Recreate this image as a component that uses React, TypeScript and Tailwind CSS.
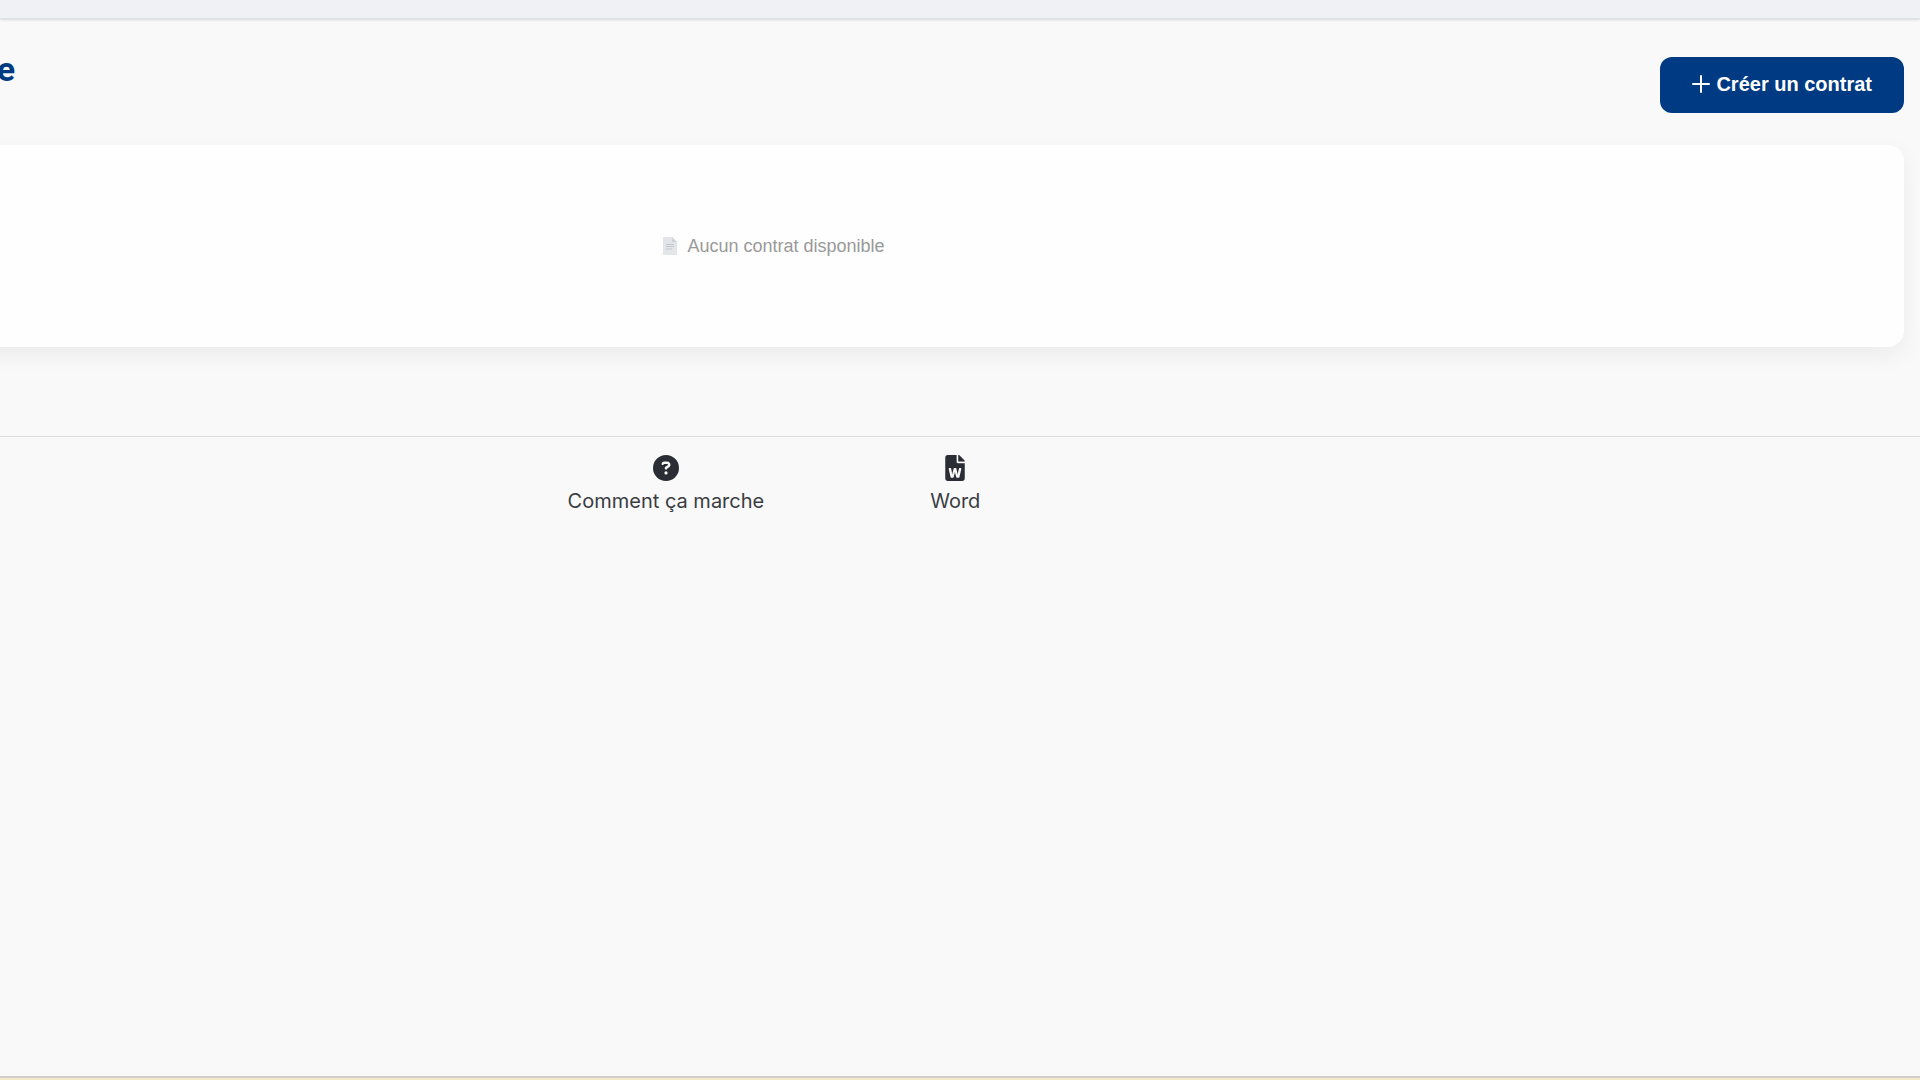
import React from 'react';
import { FaFileWord } from 'react-icons/fa';
import { FaCircleQuestion } from 'react-icons/fa6';

const footerLinks = [
  { label: 'Comment ça marche', icon: FaCircleQuestion, iconClass: 'h-[26px] w-[26px]' },
  { label: 'Word', icon: FaFileWord, iconClass: 'h-[26px] w-5 rounded-[3px]' },
];

const PlusIcon = () => (
  <svg width="18" height="18" viewBox="0 0 18 18" fill="none" stroke="currentColor" aria-hidden="true">
    <path d="M9 1v16M1 9h16" strokeWidth="2" strokeLinecap="round" />
  </svg>
);

const DocumentIcon = () => (
  <svg width="14" height="18" viewBox="0 0 14 18" aria-hidden="true">
    <path d="M0 0h9l5 5v13h-14z" fill="#e4e5e9" />
    <path d="M9 0v5h5z" fill="#cfd2d8" />
    <path d="M3 7.5h8M3 9.5h8M3 12h6" stroke="#c3c6ce" strokeWidth="1" />
  </svg>
);

export default function App() {
  return (
    <div className="flex min-h-screen flex-col overflow-hidden bg-[#f9f9f9] font-['Liberation_Sans',Arial,sans-serif]">
      <div className="h-[19px] shrink-0 border-b border-[#dfe1e4] bg-[#eff1f4] shadow-sm" />

      {/* The page is scrolled sideways, its left part lies outside the window */}
      <div className="-ml-[372px] flex grow flex-col">
        <main className="px-4 pt-[38px] pb-[89px]">
          <div className="mb-8 flex items-start justify-between">
            <h1 className="w-[371px] text-right font-[Roboto,sans-serif] text-[34px] leading-6 font-bold text-[#003b82]">
              e
            </h1>
            <button
              type="button"
              className="flex h-14 items-center gap-1.5 rounded-xl bg-[#003a82] px-8 pb-0.5 text-xl font-bold text-white"
            >
              <PlusIcon />
              Créer un contrat
            </button>
          </div>

          <section className="flex h-[202px] items-center justify-center gap-2.5 rounded-2xl bg-[#fefefe] text-lg text-[#999] shadow-[0_8px_24px_rgba(0,0,0,0.06)]">
            <DocumentIcon />
            <p>Aucun contrat disponible</p>
          </section>
        </main>

        <footer className="border-t border-[#dedede] pt-[18px]">
          <nav className="flex justify-center gap-[166px]">
            {footerLinks.map(({ label, icon: Icon, iconClass }) => (
              <a
                key={label}
                href="#"
                className="flex flex-col items-center gap-1 font-[Inter,sans-serif] text-xl leading-8 text-[#3a3d44]"
              >
                <Icon className={`text-[#2b2d35] ${iconClass}`} />
                {label}
              </a>
            ))}
          </nav>
        </footer>
      </div>

      <div className="h-1 shrink-0 border-t-2 border-[#d2cccc] bg-[#f3e8c8]" />
    </div>
  );
}
